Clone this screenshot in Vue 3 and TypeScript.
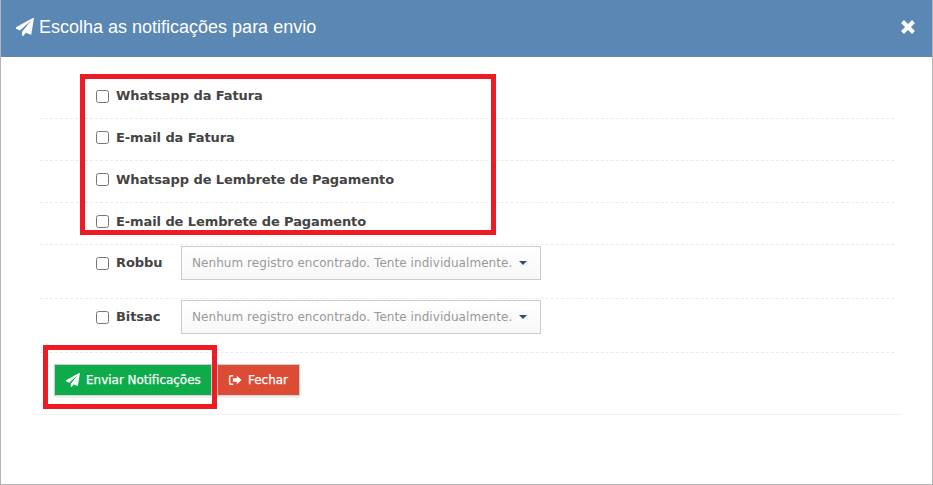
<script setup lang="ts">
const plain: string[] = ['Whatsapp da Fatura', 'E-mail da Fatura', 'Whatsapp de Lembrete de Pagamento', 'E-mail de Lembrete de Pagamento']
const selects: string[] = ['Robbu', 'Bitsac']
const placeholder = 'Nenhum registro encontrado. Tente individualmente.'
const planePath = 'M15.6.1c.2.1.3.4.3.6l-2.3 13.7c0 .2-.2.3-.3.4h-.3l-.2-.1-4-1.6-2.2 2.6c-.1.2-.3.3-.5.3h-.2c-.3-.1-.5-.4-.5-.7v-3.1l7.9-9.7-9.8 8.5-3.6-1.5c-.2-.1-.4-.3-.4-.6 0-.2.1-.5.3-.6L15 .1c.2-.1.4-.1.6 0z'
</script>

<template>
  <div class="modal">
    <header class="head">
      <h1 class="title">
        <svg class="title-icon" viewBox="0 0 16 16"><path :d="planePath" /></svg>
        Escolha as notificações para envio
      </h1>
      <svg class="close" viewBox="0 0 14 14" aria-label="Fechar"><path d="M2.2 2.2 11.8 11.8M11.8 2.2 2.2 11.8" /></svg>
    </header>
    <div class="body">
      <div v-for="item in plain" :key="item" class="row plain">
        <label class="check"><input type="checkbox" /><span>{{ item }}</span></label>
      </div>
      <div v-for="item in selects" :key="item" class="row with-select">
        <label class="check"><input type="checkbox" /><span>{{ item }}</span></label>
        <div class="select">
          <span>{{ placeholder }}</span>
          <i class="caret"></i>
        </div>
      </div>
      <div class="actions">
        <button class="btn green" type="button">
          <svg viewBox="0 0 16 16"><path :d="planePath" /></svg>
          Enviar Notificações
        </button>
        <button class="btn red" type="button">
          <svg viewBox="0 0 16 16"><path d="M6 2.2H3.400C2 2.200 1 3.200 1 4.600v6.800c0 1.400 1 2.400 2.400 2.400H6v-1.700H3.600c-.5 0-.9-.4-.9-.9V4.800c0-.5.4-.9.9-.9H6zM10 3v3H5.500v4H10v3l5.500-5z" /></svg>
          Fechar
        </button>
      </div>
    </div>
    <div class="mark mark-list"></div>
    <div class="mark mark-btn"></div>
  </div>
</template>

<style>
html, body { margin: 0; background: #fff; }
</style>

<style scoped>
.modal {
  position: relative;
  box-sizing: border-box;
  width: 933px;
  height: 485px;
  background: #fff;
  border-left: 1px solid #b4b4b4;
  border-right: 1px solid #b4b4b4;
  border-bottom: 1px solid #b4b4b4;
  overflow: hidden;
}
.head {
  box-sizing: border-box;
  height: 57px;
  margin: 0 -1px;
  background: #5a87b3;
  display: flex;
  align-items: center;
  justify-content: space-between;
  padding: 0 17px 4px 16px;
  color: #fff;
}
.title {
  margin: 0;
  display: flex;
  align-items: center;
  gap: 5px;
  font: 400 18px/24px "Liberation Sans", Arial, sans-serif;
}
.title-icon { width: 18px; height: 18px; fill: #fff; }
.close { width: 16px; height: 16px; fill: none; stroke: #fff; stroke-width: 3.6; }
.body { box-sizing: border-box; margin: 0 30px 0 31px; padding: 0 8px; height: 358px; border-bottom: 1px solid #f0f0f0; border-radius: 0 0 4px 4px; }
.row { border-bottom: 1px dashed #ececec; box-sizing: border-box; padding-left: 56px; display: flex; align-items: center; }
.plain { height: 42px; padding-bottom: 4px; }
.plain:first-child { height: 62px; padding: 17px 0 0 56px; }
.with-select { height: 54px; padding-top: 1px; padding-bottom: 18px; }
.with-select .check { width: 85px; }
.check {
  display: flex;
  align-items: center;
  gap: 7px;
  font: 700 13px/18px "DejaVu Sans", Verdana, sans-serif;
  letter-spacing: -0.09px;
  color: #444;
}
.check input {
  appearance: none;
  box-sizing: border-box;
  width: 13px;
  height: 13px;
  margin: 0;
  background: #fff;
  border: 1px solid #767676;
  border-radius: 2.5px;
}
.select {
  box-sizing: border-box;
  width: 360px;
  height: 34px;
  display: flex;
  align-items: center;
  justify-content: space-between;
  padding: 0 13px 1px 10px;
  border: 1px solid #ccc;
  background: linear-gradient(#fff, #f8f8f8);
  color: #999;
  font: 400 12px/16px "DejaVu Sans", Verdana, sans-serif;
  letter-spacing: 0.06px;
}
.caret {
  width: 0;
  height: 0;
  border-left: 4px solid transparent;
  border-right: 4px solid transparent;
  border-top: 4px solid #2c4f78;
}
.actions { display: flex; gap: 5px; padding: 11px 0 0 15px; margin-left: -1px; }
.btn {
  box-sizing: border-box;
  height: 32px;
  display: flex;
  align-items: center;
  gap: 6px;
  border: 1px solid #c9cfcb;
  border-bottom-color: #d8d8d8;
  color: #fff;
  font: 400 12px/16px "DejaVu Sans", Verdana, sans-serif;
  letter-spacing: -0.02px;
  -webkit-text-stroke: 0.25px #fff;
  box-shadow: 0 1px 2px rgba(0,0,0,.12);
}
.btn svg { width: 14px; height: 14px; fill: #fff; }
.green { width: 158px; padding: 0 0 0 11px; background: #0dab4a; }
.red { width: 83px; padding: 0 0 0 10px; background: #dc4b33; }
.mark { position: absolute; box-sizing: border-box; border: 5px solid #ed1c24; }
.mark-list { left: 79px; top: 74px; width: 416px; height: 161px; }
.mark-btn { left: 42px; top: 345px; width: 174px; height: 64px; }
</style>
